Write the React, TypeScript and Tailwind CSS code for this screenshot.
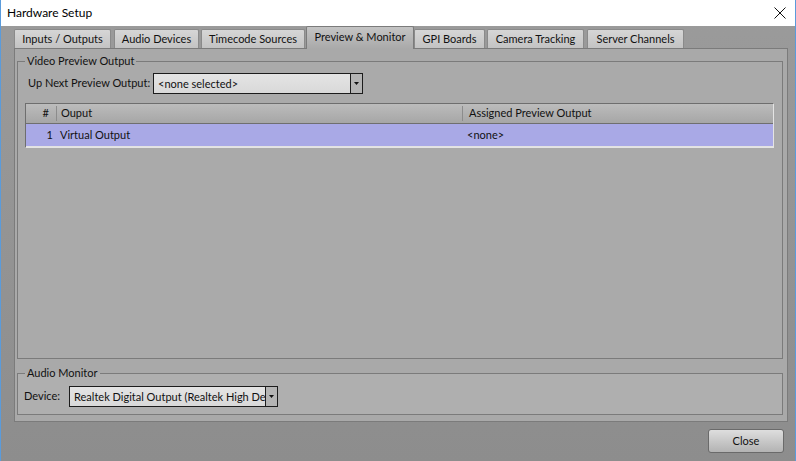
import { ReactNode } from "react";

const tabs = [
  { label: "Inputs / Outputs", cls: "w-[97px] ml-0" },
  { label: "Audio Devices", cls: "w-[85px] ml-[3px]" },
  { label: "Timecode Sources", cls: "w-[104px] ml-[2px]" },
  { label: "Preview & Monitor", cls: "w-[108px] ml-[1px]", active: true },
  { label: "GPI Boards", cls: "w-[71px] ml-0" },
  { label: "Camera Tracking", cls: "w-[97px] ml-[2px]" },
  { label: "Server Channels", cls: "w-[97px] ml-[3px]" },
];

function Combo({ value, width }: { value: string; width: string }) {
  return (
    <div className={`flex h-[21px] border border-[#1c1c1c] ${width}`}>
      <div className="flex-1 min-w-0 bg-gradient-to-b from-[#e4e4e4] to-[#d9d9d9] pl-[4px] leading-[19px] whitespace-nowrap overflow-hidden">
        {value}
      </div>
      <div className="w-[12px] shrink-0 border-l border-[#1c1c1c] bg-[#b4b4b4] flex items-center justify-center">
        <svg width="5" height="3" viewBox="0 0 5 3">
          <path d="M0 0H5L2.5 3Z" fill="#111" />
        </svg>
      </div>
    </div>
  );
}

function Group({ title, className, children }: { title: string; className: string; children: ReactNode }) {
  return (
    <fieldset className={`border border-[#7b7b7b] ${className}`}>
      <legend className="ml-[7px] px-[2px] leading-[16px]">{title}</legend>
      {children}
    </fieldset>
  );
}

export default function App() {
  return (
    <div
      className="w-[796px] h-[461px] flex flex-col border-x border-[#5a9bdb] bg-gradient-to-b from-[#9b9b9b] to-[#8d8d8d] overflow-hidden text-[11px] text-[#111]"
      style={{ fontFamily: "Lato, 'Noto Sans', sans-serif" }}
    >
      {/* title bar */}
      <div className="h-[26px] bg-white flex items-center justify-between pl-[6px] pr-[9px] shrink-0">
        <span className="text-[12px] text-black">Hardware Setup</span>
        <svg width="12" height="12" viewBox="0 0 12 12">
          <path d="M0.5 0.5L11.5 11.5M11.5 0.5L0.5 11.5" stroke="#111" strokeWidth="1" />
        </svg>
      </div>

      {/* tabs */}
      <div className="h-[22px] pl-[13px] flex items-end shrink-0">
        {tabs.map((t) =>
          t.active ? (
            <div
              key={t.label}
              className={`${t.cls} h-[23px] -mb-px relative z-10 rounded-t-[2px] border border-b-0 border-[#7b7b7b] bg-gradient-to-b from-[#c4c4c4] to-[#a9a9a9] flex items-center justify-center pb-[2px]`}
            >
              {t.label}
            </div>
          ) : (
            <div
              key={t.label}
              className={`${t.cls} h-[19px] rounded-t-[2px] border border-b-0 border-[#8a8a8a] bg-gradient-to-b from-[#d6d6d6] to-[#c3c3c3] flex items-center justify-center`}
            >
              {t.label}
            </div>
          )
        )}
      </div>

      {/* panel */}
      <div className="ml-[13px] mr-[7px] h-[374px] shrink-0 border border-[#7b7b7b] bg-[#a9a9a9] flex flex-col pl-[2px] pr-[4px] pt-[4px] pb-[6px]">
        <Group title="Video Preview Output" className="flex-1 flex flex-col min-h-0 bg-[#aaaaaa]">
          <div className="flex items-center pl-[10px] mt-[4px]">
            <span className="w-[125px] whitespace-nowrap">Up Next Preview Output:</span>
            <Combo value="<none selected>" width="w-[210px]" />
          </div>
          <div className="flex-1 flex flex-col ml-[7px] mr-[8px] mt-[9px] mb-[7px] border-t border-l border-[#6e6e6e] border-b border-r border-b-[#e4e4e4] border-r-[#e4e4e4] bg-[#a9a9a9]">
            <div className="h-[20px] flex border-b border-[#6f6f6f] bg-gradient-to-b from-[#bcbcbc] to-[#a6a6a6]">
              <div className="w-[31px] flex items-center justify-end pr-[7px] border-r border-[#8c8c8c] my-[2px]">#</div>
              <div className="w-[406px] flex items-center pl-[4px] border-r border-[#8c8c8c] my-[2px]">Ouput</div>
              <div className="flex-1 flex items-center pl-[6px]">Assigned Preview Output</div>
            </div>
            <div className="h-[23px] flex items-center bg-[#a9a9e6] border-b border-[#e2e2e2]">
              <div className="w-[31px] text-right pr-[4px]">1</div>
              <div className="w-[406px] pl-[3px]">Virtual Output</div>
              <div className="flex-1 pl-[4px]">&lt;none&gt;</div>
            </div>
          </div>
        </Group>

        <Group title="Audio Monitor" className="mt-[6px] h-[50px] shrink-0 bg-[#afafaf]">
          <div className="flex items-center pl-[6px] mt-[5px]">
            <span className="w-[45px]">Device:</span>
            <Combo value="Realtek Digital Output (Realtek High De" width="w-[209px]" />
          </div>
        </Group>
      </div>

      {/* footer */}
      <div className="flex justify-end pr-[11px] pt-[7px]">
        <button className="w-[76px] h-[24px] rounded-[3px] border border-[#6a6a6a] bg-gradient-to-b from-[#dedede] to-[#b3b3b3] text-[11px]">
          Close
        </button>
      </div>
    </div>
  );
}
